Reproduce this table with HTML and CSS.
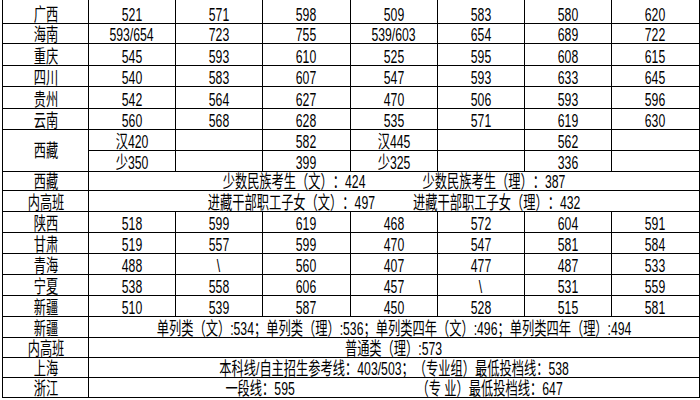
FILE: index.html
```html
<!DOCTYPE html>
<html lang="zh-CN">
<head>
<meta charset="utf-8">
<title>分数线</title>
<link rel="stylesheet" href="styles.css">
</head>
<body>
<table class="grid">
  <colgroup>
    <col class="c0"><col class="c1"><col class="c2"><col class="c3"><col class="c4"><col class="c5"><col class="c6"><col class="c7">
  </colgroup>
  <tbody>
    <tr class="h23"><td><span class="t">广西</span></td><td><span class="t">521</span></td><td><span class="t">571</span></td><td><span class="t">598</span></td><td><span class="t">509</span></td><td><span class="t">583</span></td><td><span class="t">580</span></td><td><span class="t">620</span></td></tr>
    <tr class="h19"><td><span class="t">海南</span></td><td><span class="t">593/654</span></td><td><span class="t">723</span></td><td><span class="t">755</span></td><td><span class="t">539/603</span></td><td><span class="t">654</span></td><td><span class="t">689</span></td><td><span class="t">722</span></td></tr>
    <tr class="h21"><td><span class="t">重庆</span></td><td><span class="t">545</span></td><td><span class="t">593</span></td><td><span class="t">610</span></td><td><span class="t">525</span></td><td><span class="t">595</span></td><td><span class="t">608</span></td><td><span class="t">615</span></td></tr>
    <tr class="h20"><td><span class="t">四川</span></td><td><span class="t">540</span></td><td><span class="t">583</span></td><td><span class="t">607</span></td><td><span class="t">547</span></td><td><span class="t">593</span></td><td><span class="t">633</span></td><td><span class="t">645</span></td></tr>
    <tr class="h21"><td><span class="t">贵州</span></td><td><span class="t">542</span></td><td><span class="t">564</span></td><td><span class="t">627</span></td><td><span class="t">470</span></td><td><span class="t">506</span></td><td><span class="t">593</span></td><td><span class="t">596</span></td></tr>
    <tr class="h20"><td><span class="t">云南</span></td><td><span class="t">560</span></td><td><span class="t">568</span></td><td><span class="t">628</span></td><td><span class="t">535</span></td><td><span class="t">571</span></td><td><span class="t">619</span></td><td><span class="t">630</span></td></tr>
    <tr class="h20"><td rowspan="2" class="mid"><span class="t">西藏</span></td><td><span class="t">汉420</span></td><td></td><td><span class="t">582</span></td><td><span class="t">汉445</span></td><td></td><td><span class="t">562</span></td><td></td></tr>
    <tr class="h20"><td><span class="t">少350</span></td><td></td><td><span class="t">399</span></td><td><span class="t">少325</span></td><td></td><td><span class="t">336</span></td><td></td></tr>
    <tr class="h18"><td><span class="t">西藏</span></td><td colspan="7"><div class="m"><span class="t">少数民族考生（文）：424<i class="sp sp1"></i>少数民族考生（理）：387</span></div></td></tr>
    <tr class="h20"><td><span class="t">内高班</span></td><td colspan="7"><div class="m"><span class="t">进藏干部职工子女（文）：497<i class="sp sp2"></i>进藏干部职工子女（理）：432</span></div></td></tr>
    <tr class="h20"><td><span class="t">陕西</span></td><td><span class="t">518</span></td><td><span class="t">599</span></td><td><span class="t">619</span></td><td><span class="t">468</span></td><td><span class="t">572</span></td><td><span class="t">604</span></td><td><span class="t">591</span></td></tr>
    <tr class="h20"><td><span class="t">甘肃</span></td><td><span class="t">519</span></td><td><span class="t">557</span></td><td><span class="t">599</span></td><td><span class="t">470</span></td><td><span class="t">547</span></td><td><span class="t">581</span></td><td><span class="t">584</span></td></tr>
    <tr class="h20"><td><span class="t">青海</span></td><td><span class="t">488</span></td><td><span class="t">\</span></td><td><span class="t">560</span></td><td><span class="t">407</span></td><td><span class="t">477</span></td><td><span class="t">487</span></td><td><span class="t">533</span></td></tr>
    <tr class="h20"><td><span class="t">宁夏</span></td><td><span class="t">538</span></td><td><span class="t">558</span></td><td><span class="t">606</span></td><td><span class="t">457</span></td><td><span class="t">\</span></td><td><span class="t">531</span></td><td><span class="t">559</span></td></tr>
    <tr class="h20"><td><span class="t">新疆</span></td><td><span class="t">510</span></td><td><span class="t">539</span></td><td><span class="t">587</span></td><td><span class="t">450</span></td><td><span class="t">528</span></td><td><span class="t">515</span></td><td><span class="t">581</span></td></tr>
    <tr class="h20"><td><span class="t">新疆</span></td><td colspan="7"><div class="m"><span class="t">单列类（文）:534；单列类（理）:536；单列类四年（文）:496；单列类四年（理）:494</span></div></td></tr>
    <tr class="h19"><td><span class="t">内高班</span></td><td colspan="7"><div class="m"><span class="t">普通类（理）:573</span></div></td></tr>
    <tr class="h19"><td><span class="t">上海</span></td><td colspan="7"><div class="m"><span class="t">本科线/自主招生参考线：403/503；（专业组）最低投档线：538</span></div></td></tr>
    <tr class="h19"><td><span class="t">浙江</span></td><td colspan="7"><div class="m"><span class="t">一段线：595<i class="sp sp3"></i>（专 业）最低投档线：647</span></div></td></tr>
  </tbody>
</table>
</body>
</html>
```

FILE: styles.css
```css
html, body {
  margin: 0;
  padding: 0;
  background: #ffffff;
}

body {
  width: 700px;
  height: 400px;
  overflow: hidden;
  font-family: "Liberation Sans", "Noto Sans CJK SC", sans-serif;
  font-size: 18px;
  color: #000000;
  text-spacing-trim: space-all;
  font-feature-settings: "chws" 0, "halt" 0;
}

.grid {
  margin-left: 2px;
  border-collapse: collapse;
  table-layout: fixed;
  width: 697px;
}

.c0 { width: 86px; }
.c1 { width: 87px; }
.c2 { width: 87px; }
.c3 { width: 88px; }
.c4 { width: 87px; }
.c5 { width: 87px; }
.c6 { width: 87px; }
.c7 { width: 88px; }

.grid td {
  border: 1px solid #000000;
  padding: 0;
  text-align: center;
  vertical-align: bottom;
  line-height: 16px;
  overflow: visible;
  white-space: nowrap;
}

.grid tr:first-child td {
  border-top: 0;
}

.grid td.mid {
  vertical-align: middle;
}

.h23 td { height: 23px; }
.h21 td { height: 21px; }
.h20 td { height: 20px; }
.h19 td { height: 19px; }
.h18 td { height: 18px; }

.t {
  display: inline-block;
  white-space: nowrap;
  transform: scaleX(0.68);
  transform-origin: center center;
}

.m {
  display: flex;
  justify-content: center;
  line-height: 16px;
}

.m .t {
  flex: none;
}

.sp {
  display: inline-block;
  height: 1px;
}

.sp1 { width: 84px; }
.sp2 { width: 56px; }
.sp3 { width: 179px; }
```
